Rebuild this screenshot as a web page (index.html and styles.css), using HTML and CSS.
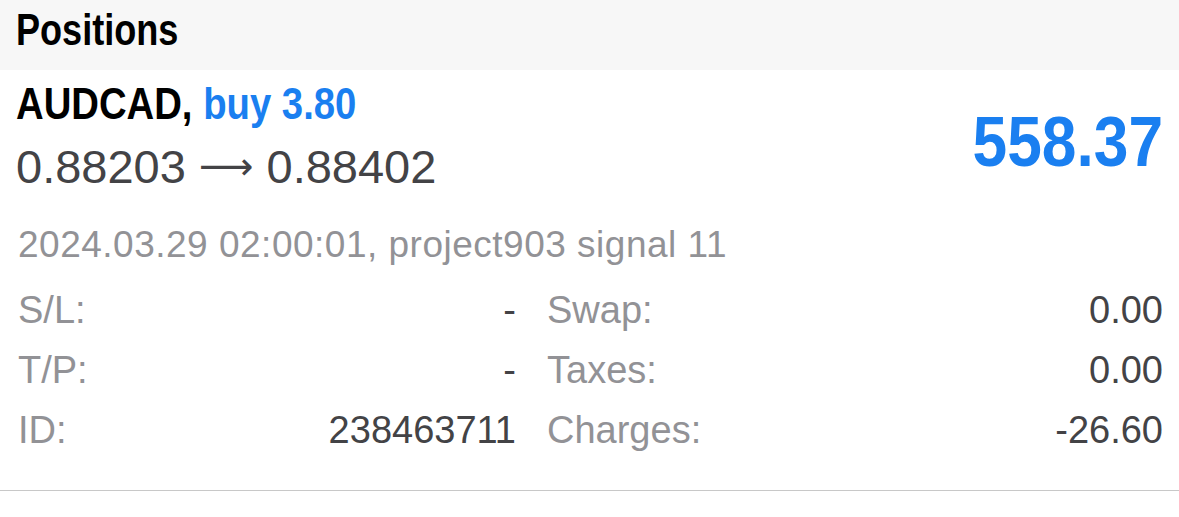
FILE: index.html
```html
<!DOCTYPE html>
<html>
<head>
<meta charset="utf-8">
<link rel="stylesheet" href="styles.css">
</head>
<body>
<div class="header"><span class="title">Positions</span></div>
<div class="position">
  <div class="top">
    <div class="main">
      <div class="symbol"><span class="cond">AUDCAD, <span class="side">buy 3.80</span></span></div>
      <div class="prices">0.88203 <span class="arrow">⟶</span> 0.88402</div>
    </div>
    <div class="profit"><span class="cond-r">558.37</span></div>
  </div>
  <div class="meta">2024.03.29 02:00:01, project903 signal 11</div>
  <div class="grid">
    <span class="label">S/L:</span><span class="value">-</span>
    <span class="label right-label">Swap:</span><span class="value">0.00</span>
    <span class="label">T/P:</span><span class="value">-</span>
    <span class="label right-label">Taxes:</span><span class="value">0.00</span>
    <span class="label">ID:</span><span class="value">238463711</span>
    <span class="label right-label">Charges:</span><span class="value">-26.60</span>
  </div>
</div>
<div class="sep"></div>
</body>
</html>
```
FILE: styles.css
```css
* { box-sizing: border-box; }
body {
  margin: 0;
  background: #ffffff;
  font-family: "Liberation Sans", Arial, sans-serif;
  width: 1179px;
  height: 517px;
  overflow: hidden;
}
.header {
  height: 70px;
  background: #f7f7f7;
  padding-left: 16px;
}
.title {
  display: inline-block;
  font-weight: bold;
  font-size: 44px;
  line-height: 44px;
  margin-top: 8px;
  color: #000;
  transform: scaleX(0.82);
  transform-origin: left center;
}
.position {
  padding: 0 16px;
}
.top {
  display: flex;
  justify-content: space-between;
  align-items: flex-start;
}
.symbol {
  font-weight: bold;
  font-size: 44px;
  line-height: 44px;
  margin-top: 12px;
  color: #000;
  white-space: nowrap;
}
.cond {
  display: inline-block;
  transform: scaleX(0.87);
  transform-origin: left center;
}
.side { color: #1a7ff0; }
.prices {
  font-size: 47px;
  line-height: 47px;
  margin-top: 17px;
  color: #434346;
  white-space: nowrap;
}
.arrow {
  font-family: "DejaVu Sans", sans-serif;
  font-size: 38px;
  position: relative;
  top: -4px;
}
.profit {
  font-weight: bold;
  font-size: 70px;
  line-height: 70px;
  margin-top: 37px;
  color: #1a7ff0;
}
.cond-r {
  display: inline-block;
  transform: scaleX(0.89);
  transform-origin: right center;
}
.meta {
  font-size: 37px;
  line-height: 38px;
  margin-top: 32px;
  padding-left: 2px;
  color: #929296;
  letter-spacing: 0.5px;
}
.grid {
  display: grid;
  grid-template-columns: 140px 360px 200px 1fr;
  row-gap: 16px;
  margin-top: 24px;
  font-size: 38px;
  line-height: 44px;
}
.label { color: #929296; padding-left: 2px; }
.right-label { padding-left: 31px; }
.value { color: #434346; text-align: right; }
.sep {
  position: absolute;
  left: 0;
  right: 0;
  top: 490px;
  height: 1px;
  background: #c8c8c8;
}
```
